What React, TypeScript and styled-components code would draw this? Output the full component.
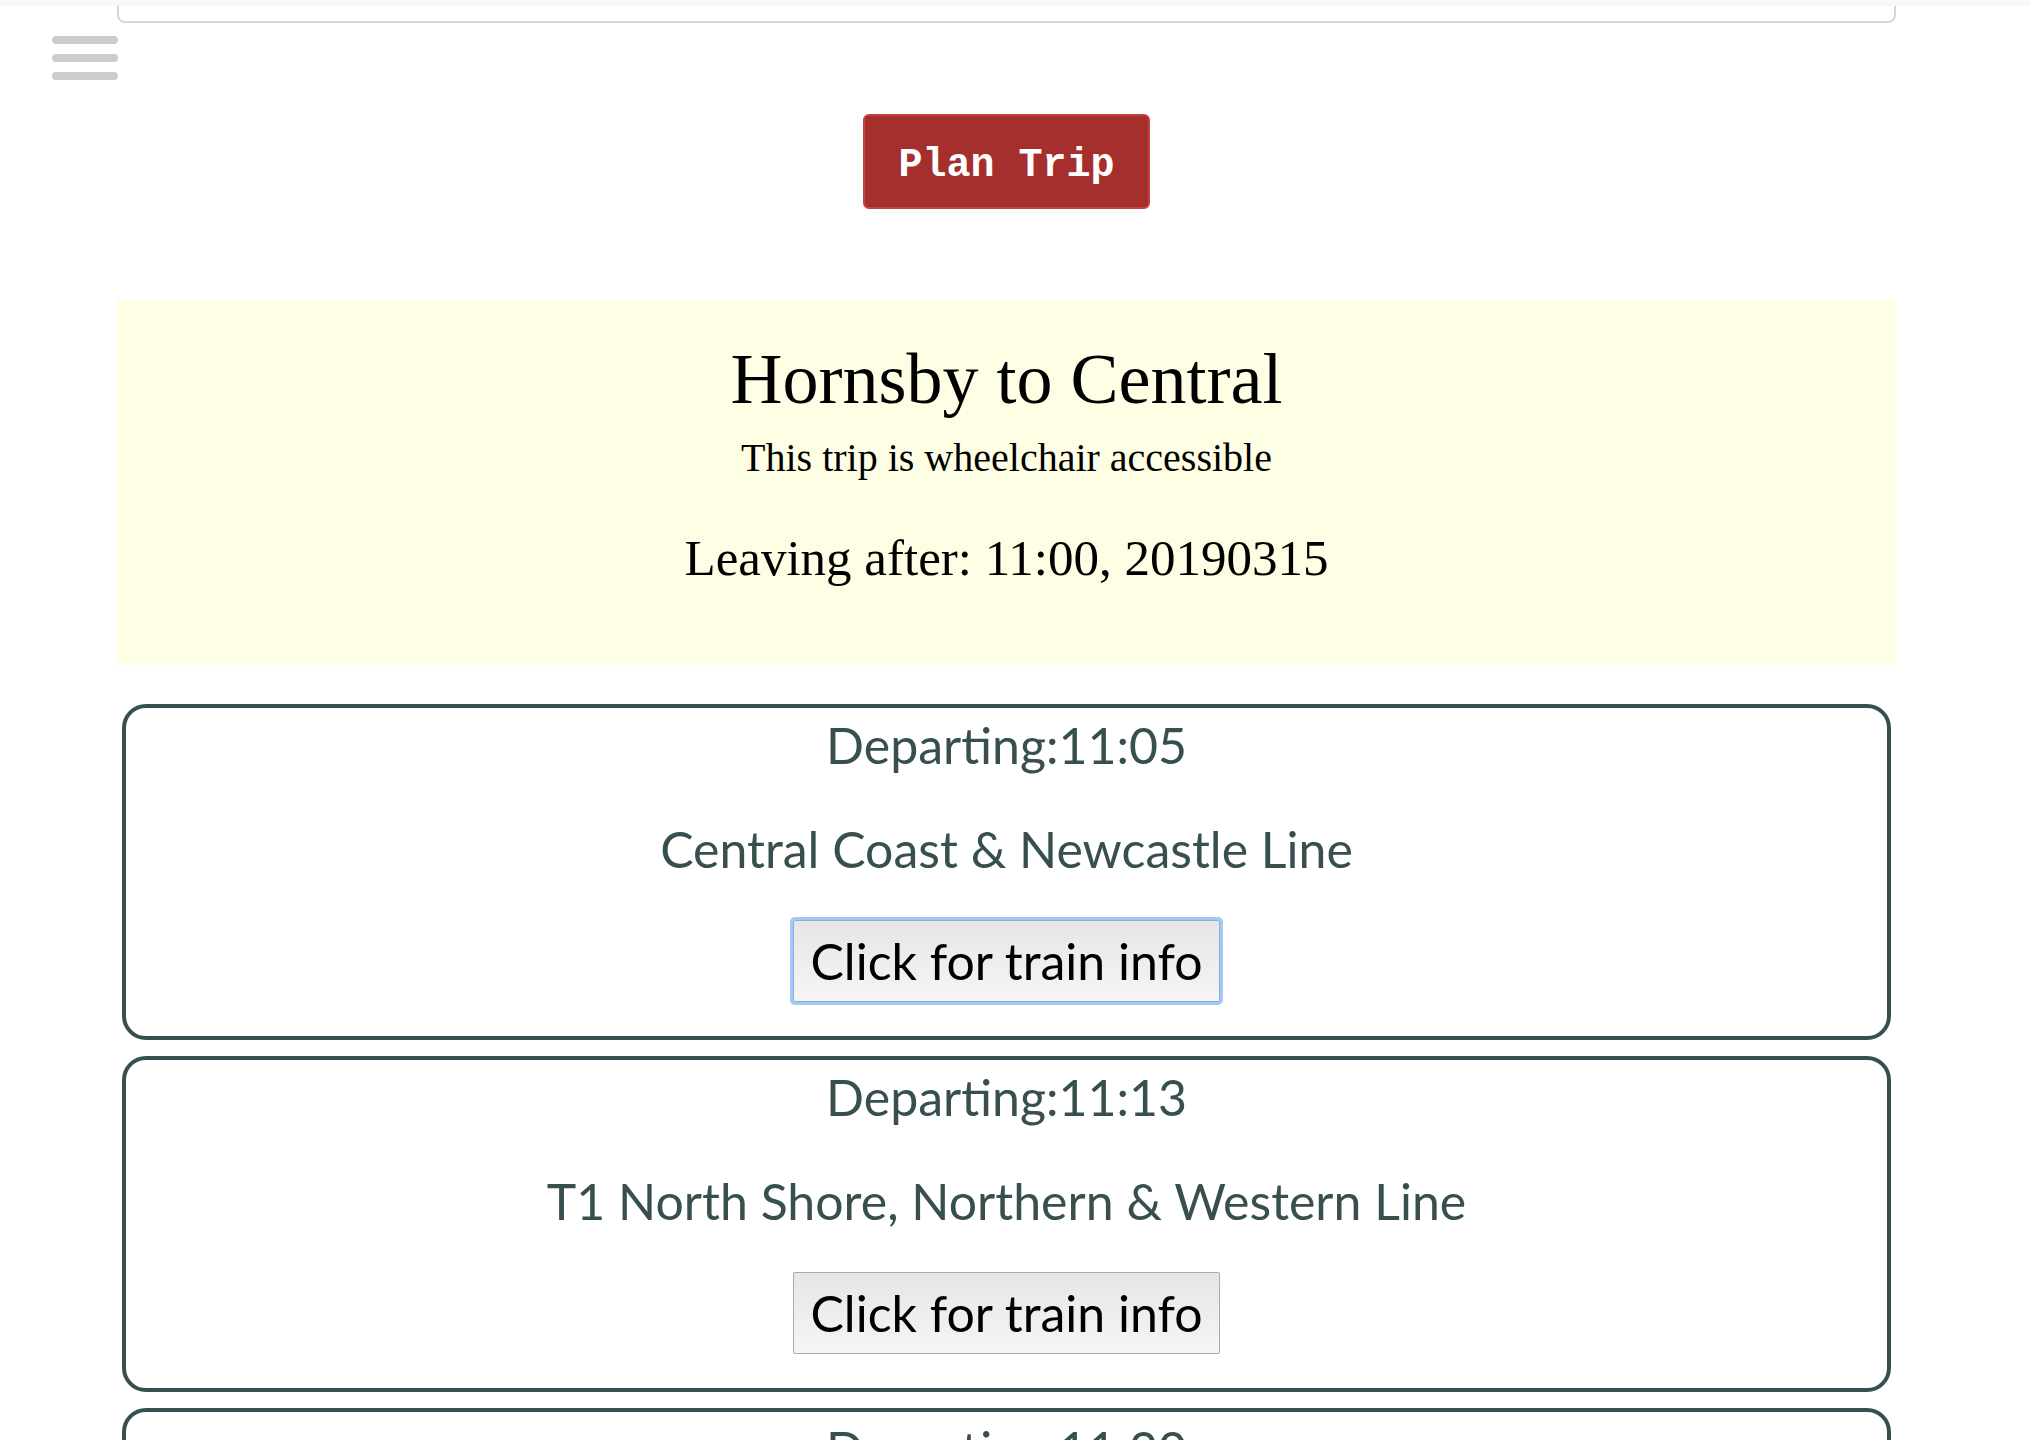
import React from "react";
import styled, { createGlobalStyle } from "styled-components";

const GlobalStyle = createGlobalStyle`
  html, body {
    margin: 0;
    padding: 0;
    background: #ffffff;
  }
  body {
    font-family: "Lato", "Open Sans", sans-serif;
  }
  * {
    box-sizing: border-box;
  }
`;

const Page = styled.div`
  position: relative;
  padding-right: 17px;
`;

const TopStrip = styled.div`
  height: 6px;
  margin-right: -17px;
  background: #f7f8fa;
`;

const MenuToggle = styled.button`
  position: absolute;
  top: 36px;
  left: 52px;
  display: flex;
  flex-direction: column;
  gap: 10px;
  padding: 0;
  margin: 0;
  border: none;
  background: transparent;
  cursor: pointer;
`;

const MenuBar = styled.span`
  display: block;
  width: 66px;
  height: 8px;
  border-radius: 4px;
  background: #cccccc;
`;

const Container = styled.div`
  width: 1779px;
  margin: 0 auto;
`;

const HeaderPanel = styled.div`
  height: 17px;
  border: 2px solid #d3d7dc;
  border-top: none;
  border-radius: 0 0 8px 8px;
  background: #ffffff;
`;

const ActionRow = styled.div`
  display: flex;
  justify-content: center;
  padding: 91px 0 91px;
`;

const PlanButton = styled.button`
  font-family: "Liberation Mono", "Courier New", monospace;
  font-weight: bold;
  font-size: 40px;
  line-height: 49px;
  color: #ffffff;
  background: #a52f2c;
  border: 2px solid #c8403f;
  border-radius: 6px;
  padding: 25px 33px 17px;
  cursor: pointer;
`;

const Summary = styled.section`
  background: #fefee4;
  padding: 36px 0 76px;
  text-align: center;
  color: #000000;
  font-family: "Liberation Serif", "Times New Roman", serif;
`;

const Title = styled.h1`
  margin: 0;
  font-size: 72px;
  line-height: 86px;
  font-weight: normal;
`;

const Subtitle = styled.p`
  margin: 12px 0 0;
  font-size: 40px;
  line-height: 48px;
`;

const Leaving = styled.p`
  margin: 45px 0 0;
  font-size: 51px;
  line-height: 62px;
`;

const TripList = styled.div`
  display: flex;
  flex-direction: column;
  gap: 16px;
  margin-top: 39px;
  padding: 0 5px 40px;
`;

const TripCard = styled.article`
  display: flex;
  flex-direction: column;
  align-items: center;
  border: 4px solid #37504f;
  border-radius: 24px;
  padding: 7px 17px 34px;
  color: #37504f;
  font-family: "Lato", "Open Sans", sans-serif;
  font-size: 50px;
  line-height: 60px;
  text-align: center;
`;

const Departing = styled.div`
  margin: 0;
`;

const LineName = styled.p`
  margin: 44px 0 0;
`;

const InfoButton = styled.button<{ $focused?: boolean }>`
  margin-top: 41px;
  font-family: "Lato", "Open Sans", sans-serif;
  font-size: 50px;
  line-height: 60px;
  color: #000000;
  padding: 10px 16px;
  border: 1px solid ${(p) => (p.$focused ? "#86aee6" : "#a9a9a9")};
  border-radius: 2px;
  background: linear-gradient(#e6e6e6, #f5f5f5);
  box-shadow: ${(p) => (p.$focused ? "0 0 0 3px #a4c7f4" : "none")};
  cursor: pointer;
`;

type Trip = { time: string; line: string };

const trips: Trip[] = [
  { time: "11:05", line: "Central Coast & Newcastle Line" },
  { time: "11:13", line: "T1 North Shore, Northern & Western Line" },
  { time: "11:20", line: "T1 North Shore, Northern & Western Line" },
];

export default function App() {
  return (
    <>
      <GlobalStyle />
      <Page>
        <TopStrip />
        <MenuToggle aria-label="Menu">
          <MenuBar />
          <MenuBar />
          <MenuBar />
        </MenuToggle>
        <Container>
          <HeaderPanel />
          <ActionRow>
            <PlanButton>Plan Trip</PlanButton>
          </ActionRow>
          <Summary>
            <Title>Hornsby to Central</Title>
            <Subtitle>This trip is wheelchair accessible</Subtitle>
            <Leaving>Leaving after: 11:00, 20190315</Leaving>
          </Summary>
          <TripList>
            {trips.map((t, i) => (
              <TripCard key={t.time}>
                <Departing>Departing:{t.time}</Departing>
                <LineName>{t.line}</LineName>
                <InfoButton $focused={i === 0}>Click for train info</InfoButton>
              </TripCard>
            ))}
          </TripList>
        </Container>
      </Page>
    </>
  );
}
